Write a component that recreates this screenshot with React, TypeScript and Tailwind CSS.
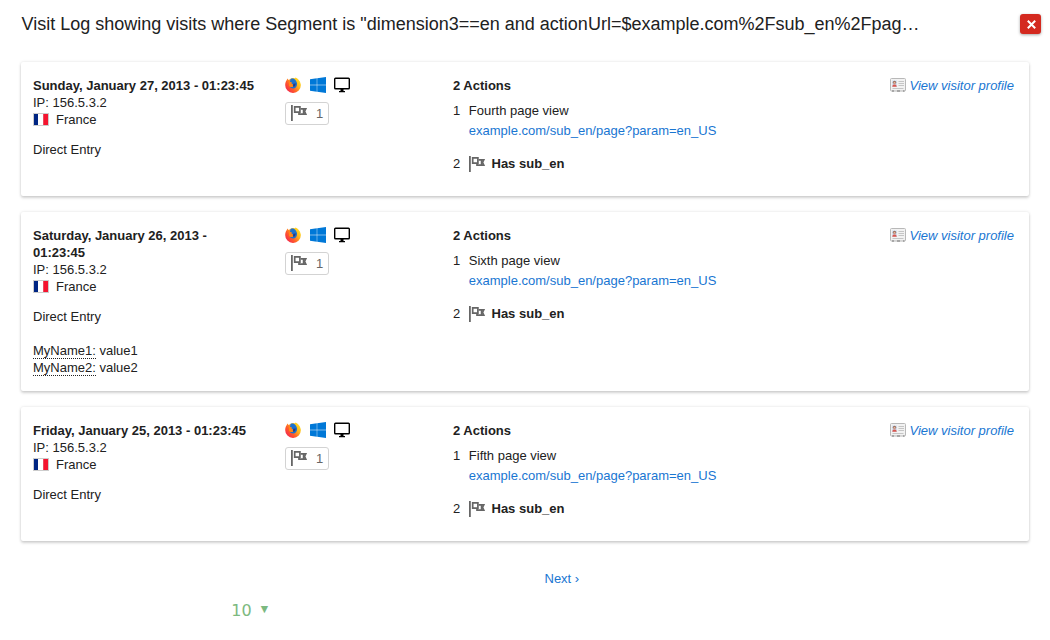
import React from "react";

type Visit = {
  date: string;
  title: string;
  variables?: [string, string][];
};

const visits: Visit[] = [
  { date: "Sunday, January 27, 2013 - 01:23:45", title: "Fourth page view" },
  {
    date: "Saturday, January 26, 2013 - 01:23:45",
    title: "Sixth page view",
    variables: [
      ["MyName1:", "value1"],
      ["MyName2:", "value2"],
    ],
  },
  { date: "Friday, January 25, 2013 - 01:23:45", title: "Fifth page view" },
];

function FirefoxIcon() {
  return (
    <svg className="block size-4" viewBox="0 0 16 16">
      <defs>
        <linearGradient id="fox" x1="0.95" y1="0.15" x2="0.15" y2="0.85">
          <stop offset="0" stopColor="#ffe226" />
          <stop offset="0.35" stopColor="#ffb41c" />
          <stop offset="0.7" stopColor="#ff5a2a" />
          <stop offset="1" stopColor="#f5304a" />
        </linearGradient>
      </defs>
      <path d="M1.600 3.200 2.500 1.600l1 1.300L5 2.200 7.500 .9l2.500 .3L10.600 .4c2.200 1 4.900 3.600 5.200 7.200A7.700 7.700 0 0 1 8 15.900 7.700 7.700 0 0 1 .2 8C.2 6 .7 4.500 1.600 3.200z" fill="url(#fox)" />
      <path d="M5.600 1.800C7.500 .9 9.500 1.500 10.600 3.200c1.800 2 2 5 .4 7-1.700 1.700-4.700 1.500-6.200-.2l2.800-1 1-1.300-2.400-.7 .7-1.200L5 4.800z" fill="#1a72cf" />
      <path d="M4 5l2.900.8-.7 1.100 2 .6-1.500 1.300 2 .6c-1.300 1-3.700.8-4.700-.6z" fill="#ff8a16" />
      <path d="M8.200 6.800l2.600-.4-.8 2.900-2 .4z" fill="#293c82" />
    </svg>
  );
}

function WindowsIcon() {
  return (
    <svg className="block size-4" viewBox="0 0 16 16" fill="#0078d7">
      <path d="M0 2.300 6.800 1.300v6.400H0zM7.200 1.200 16 0v7.700H7.200zM0 8.200h6.800v6.500L0 13.700zM7.200 8.200H16V16l-8.800-1.200z" />
    </svg>
  );
}

function DesktopIcon() {
  return (
    <svg className="block size-4" viewBox="0 0 16 16">
      <rect x="0.700" y="1.200" width="14.600" height="10.600" rx="0.800" fill="none" stroke="#000" strokeWidth="1.400" />
      <path d="M6.500 12h3v2H11v1.300H5V14h1.500z" fill="#000" />
    </svg>
  );
}

function GoalIcon() {
  return (
    <svg className="block size-4 shrink-0" viewBox="0 0 16 16" fill="none" stroke="#666">
      <path d="M.9 0v16" strokeWidth="1.800" />
      <path d="M3.700 1.800h5.200v5.400H3.700z" strokeWidth="1.700" />
      <path d="M9.600 3.800h5.200L13.500 6.400l1.300 2.800H8V7.500" strokeWidth="1.700" />
      <path d="M12.600 4v5" strokeWidth="1.700" />
    </svg>
  );
}

function ProfileIcon() {
  return (
    <svg className="block h-4 w-4" viewBox="0 0 16 16">
      <rect x="0.500" y="1.500" width="15" height="12.500" rx="1" fill="#f2f2f2" stroke="#b8b8b8" />
      <path d="M2 14h2m3 0h3m3 0h1.500" stroke="#777" />
      <rect x="2" y="3.500" width="5" height="6.500" fill="#d3dfef" />
      <circle cx="4.500" cy="5.300" r="1.600" fill="#8d6558" />
      <circle cx="4.500" cy="5.800" r="1" fill="#e9b295" />
      <path d="M2.300 9.800c0-1.800 1-2.300 2.200-2.300s2.200.5 2.200 2.300z" fill="#d9564d" />
      <path d="M8.500 4.500h5.500M8.500 6.500h5.500M8.500 8.500h5.500M2.500 11.500h11" stroke="#bfbfbf" strokeWidth="0.900" />
    </svg>
  );
}

function VisitCard({ visit }: { visit: Visit }) {
  return (
    <article
      className={`flex rounded-[2px] bg-white pl-3 pr-[15px] pt-[15px] shadow-[0_2px_3px_0_rgba(0,0,0,0.16),0_0_3px_0_rgba(0,0,0,0.12)] ${
        visit.variables ? "h-[179px]" : "h-[134px]"
      }`}
    >
      <div className="w-[252px] shrink-0 pr-[26px] leading-[17px]">
        <div className="font-bold">{visit.date}</div>
        <div>IP: 156.5.3.2</div>
        <div className="flex items-center">
          <svg className="mr-[7px] block h-[13px] w-4" viewBox="0 0 16 13">
            <path d="M0 0h16v13H0z" fill="#ccc" />
            <path d="M1 1h4v11H1z" fill="#002583" />
            <path d="M5 1h5v11H5z" fill="#fff" />
            <path d="M10.300 1H15v11h-4.700z" fill="#f5142f" />
          </svg>
          France
        </div>
        <div className="mt-[13px]">Direct Entry</div>
        {visit.variables && (
          <div className="mt-[17px]">
            {visit.variables.map(([name, value]) => (
              <div key={name}>
                <span className="border-b border-dotted border-[#212121]">{name}</span> {value}
              </div>
            ))}
          </div>
        )}
      </div>
      <div className="w-[168px] shrink-0">
        <div className="flex gap-[9px]">
          <FirefoxIcon />
          <WindowsIcon />
          <span className="-ml-px">
            <DesktopIcon />
          </span>
        </div>
        <div className="mt-[9px] flex h-[23px] w-11 rounded-[3px] border border-[#d3d3d3] pl-[5px] pt-[2px] text-[#666]">
          <GoalIcon />
          <span className="ml-[9px] leading-[18px]">1</span>
        </div>
      </div>
      <div className="flex-1">
        <div className="font-bold leading-[17px]">2 Actions</div>
        <div className="mt-[7px] flex leading-5">
          <span className="w-[15.800px]">1</span>
          <div>
            <div>{visit.title}</div>
            <a className="text-[#1976d2]">example.com/sub_en/page?param=en_US</a>
          </div>
        </div>
        <div className="mt-[13px] flex h-5 items-center">
          <span className="w-4">2</span>
          <GoalIcon />
          <span className="ml-[6.500px] font-bold">Has sub_en</span>
        </div>
      </div>
      <a className="flex h-[17px] items-center gap-[3.500px] italic text-[#1976d2]">
        <span className="-mt-px">
          <ProfileIcon />
        </span>
        View visitor profile
      </a>
    </article>
  );
}

export default function App() {
  return (
    <main className="h-[640px] overflow-hidden bg-white font-['Liberation_Sans',sans-serif] text-[13px] text-[#212121]">
      <header className="flex h-[62px] justify-between pl-[21.500px] pr-[9px]">
        <h1 className="pt-3 text-[18px] leading-6">
          Visit Log showing visits where Segment is "dimension3==en and actionUrl=$example.com%2Fsub_en%2Fpag…
        </h1>
        <button className="mt-[14px] flex h-5 w-[21px] items-center justify-center rounded-[3px] bg-[#d4291f] pl-px pt-px shadow-[0_1px_3px_rgba(0,0,0,0.35)]">
          <svg className="size-[9px]" viewBox="0 0 9 9" stroke="#fff" strokeWidth="2">
            <path d="M.8 .8l7.400 7.400M8.200 .8L.8 8.200" />
          </svg>
        </button>
      </header>
      <section className="flex flex-col gap-4 px-[21px]">
        {visits.map((visit) => (
          <VisitCard key={visit.date} visit={visit} />
        ))}
      </section>
      <nav className="mt-[29px] pl-[544.500px] leading-[17px] text-[#1976d2]">Next ›</nav>
      <div className="mt-3 flex items-center pl-[231.300px] font-['DejaVu_Sans',sans-serif] text-[16px] leading-6 text-[#7cb980]">
        10
        <span className="-mt-[4px] ml-[9px] text-[9.500px] leading-4">▼</span>
      </div>
    </main>
  );
}
